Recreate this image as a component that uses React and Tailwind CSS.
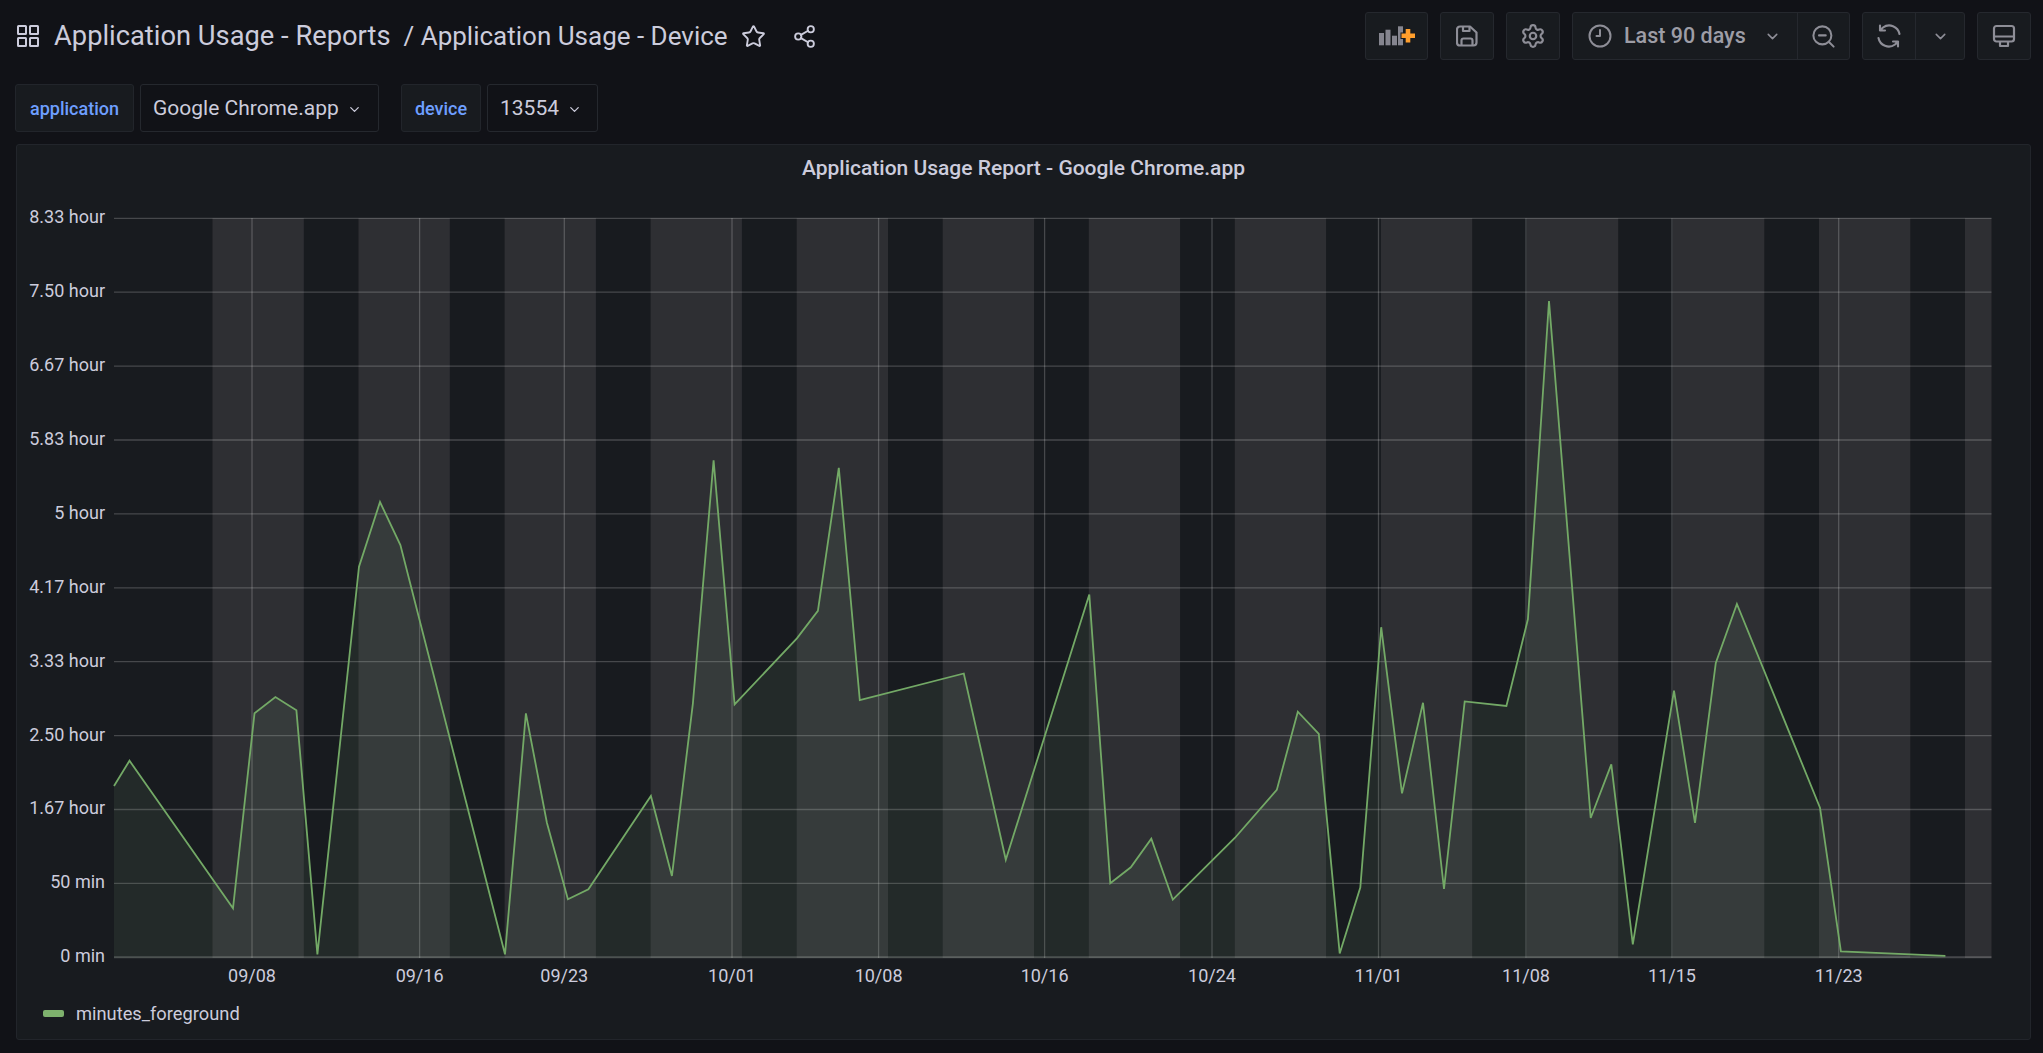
import React from "react";
import { Star, Share2, ChevronDown, Settings, ZoomOut } from "lucide-react";

const yTicks = [
  ["8.33 hour", 218.7],
  ["7.50 hour", 292.6],
  ["6.67 hour", 366.5],
  ["5.83 hour", 440.4],
  ["5 hour", 514.3],
  ["4.17 hour", 588.2],
  ["3.33 hour", 662.1],
  ["2.50 hour", 736],
  ["1.67 hour", 809.9],
  ["50 min", 883.8],
  ["0 min", 957.7],
];

const xTicks = [
  ["09/08", 252],
  ["09/16", 419.6],
  ["09/23", 564.3],
  ["10/01", 732],
  ["10/08", 878.6],
  ["10/16", 1044.6],
  ["10/24", 1212],
  ["11/01", 1378.5],
  ["11/08", 1526],
  ["11/15", 1672],
  ["11/23", 1838.7],
];

const bands = [212.5, 358.5, 504.6, 650.6, 796.7, 942.7, 1088.8, 1234.8, 1380.9, 1526.9, 1673, 1819, 1965];

const points = [
  [114, 786], [129.5, 760.7], [233, 908.3], [254.5, 713.3], [275.4, 697], [296.4, 710.3], [317.4, 954.3],
  [359, 566.7], [380, 502], [400.4, 545], [505, 954.3], [525.9, 713.3], [546.9, 822.7], [567.9, 899.3],
  [588.4, 889.3], [650.9, 796], [671.9, 876], [692.9, 703.3], [713.6, 460.3], [734.6, 704.4], [796.9, 638.3],
  [817.9, 610.8], [838.8, 467.9], [859.8, 700], [963.8, 673.5], [1005.8, 859.8], [1089.3, 594.6], [1110.3, 883.2],
  [1130.8, 867.3], [1151.3, 838.7], [1172.8, 899.7], [1234.8, 838], [1276.8, 789.9], [1297.8, 711.7], [1318.8, 734],
  [1339.7, 953.4], [1360.3, 887.5], [1381.2, 627.2], [1402, 793.4], [1423, 702.8], [1444, 889], [1464.7, 701.4],
  [1506.4, 705.9], [1527.9, 619.3], [1549, 301], [1590.7, 818], [1611.3, 764.4], [1632.8, 944.3], [1674, 690.7],
  [1695, 822.9], [1715.8, 663], [1736.9, 604], [1820, 807.7], [1840.9, 951.4], [1945.4, 955.9],
];

const line = points.map((p) => p.join(",")).join(" ");
const area = `114,958 ${line} 1945.4,958`;

const AppsIcon = () => (
  <svg width="24" height="24" viewBox="0 0 24 24" fill="none" stroke="#ccccdc" strokeWidth="2">
    <rect x="2" y="2" width="8" height="8" rx="0.5" />
    <rect x="14" y="2" width="8" height="8" rx="0.5" />
    <rect x="2" y="14" width="8" height="8" rx="0.5" />
    <rect x="14" y="14" width="8" height="8" rx="0.5" />
  </svg>
);

const PanelAddIcon = () => (
  <svg width="38" height="24" viewBox="0 0 38 24" fill="#85858f">
    <rect x="1" y="9" width="5" height="12.300" />
    <rect x="7.500" y="5.700" width="5" height="15.600" />
    <rect x="14" y="11.700" width="5" height="9.600" />
    <rect x="20" y="2.300" width="5" height="19" />
    <path
      d="M27.700 5h4.600v4.400H37V14h-4.700v4.500h-4.600V14H23.500V9.400h4.200z"
      fill="#ff9e2c"
      stroke="#181b1f"
      strokeWidth="2"
      paintOrder="stroke"
    />
  </svg>
);

const SaveIcon = () => (
  <svg width="22" height="22" viewBox="0 0 22 22" fill="none" stroke="#8e8e97" strokeWidth="2.200" strokeLinejoin="round">
    <path d="M4 1.500h10l6.500 6v10a3 3 0 0 1-3 3h-13.500a3 3 0 0 1-3-3v-13a3 3 0 0 1 3-3z" />
    <path d="M7 1.500v4.500h6.500V1.500M5.500 20.500v-5a2 2 0 0 1 2-2h7a2 2 0 0 1 2 2v5" />
  </svg>
);

const ClockIcon = () => (
  <svg width="24" height="24" viewBox="0 0 24 24" fill="none" stroke="#8e8e97" strokeWidth="2" strokeLinecap="round" strokeLinejoin="round">
    <circle cx="12" cy="12" r="10.500" />
    <path d="M12 6v6H8.500" />
  </svg>
);

const SyncIcon = () => (
  <svg width="24" height="24" viewBox="0 0 24 24" fill="none" stroke="#8e8e97" strokeWidth="2.100" strokeLinecap="round" strokeLinejoin="round">
    <path d="M22.500 10A10.500 10.500 0 0 0 6 3.500L3 6.500M3 1.500v5h5" />
    <path d="M1.500 14A10.500 10.500 0 0 0 18 20.500l3-3M21 22.500v-5h-5" />
  </svg>
);

const MonitorIcon = () => (
  <svg width="24" height="24" viewBox="0 0 24 24" fill="none" stroke="#8e8e97" strokeWidth="2.200" strokeLinejoin="round">
    <rect x="2" y="2" width="20" height="15.500" rx="2.500" />
    <path d="M2 12.500h20M8 17.500v4.500h8v-4.500" />
  </svg>
);

const ToolButton = ({ children, className }) => (
  <div className={`h-[48px] flex items-center justify-center bg-[#181b1f] border border-[#25282e] rounded-[3px] ${className}`}>
    {children}
  </div>
);

const VarLabel = ({ children, className }) => (
  <div className={`h-[48px] flex items-center justify-center bg-[#181b1f] border border-[#22252b] rounded-[3px] text-[#6e9fff] text-[18px] font-medium ${className}`}>
    {children}
  </div>
);

const VarSelect = ({ children, className }) => (
  <div className={`h-[48px] flex items-center gap-[8px] pl-[12px] pt-[2px] bg-[#111217] border border-[#25282e] rounded-[3px] text-[#ccccdc] text-[21px] ${className}`}>
    {children}
    <ChevronDown size={15} color="#ccccdc" />
  </div>
);

const App = () => {
  return (
    <div className="w-[2043px] h-[1053px] overflow-hidden bg-[#111217] pl-[15px] pr-[12px] pt-[12px] font-['Roboto',sans-serif]">
      {/* top bar */}
      <div className="h-[48px] flex items-center justify-between">
        <div className="flex items-center text-[#ccccdc] pl-[1px]">
          <AppsIcon />
          <span className="ml-[14px] text-[27.3px]">Application Usage - Reports</span>
          <span className="ml-[13px] text-[26px]">/ Application Usage - Device</span>
          <Star size={25} strokeWidth={1.8} className="ml-[13px]" color="#ccccdc" />
          <Share2 size={25} strokeWidth={1.8} className="ml-[26px]" color="#ccccdc" />
        </div>
        <div className="flex items-center">
          <ToolButton className="w-[63px]"><PanelAddIcon /></ToolButton>
          <ToolButton className="w-[54px] ml-[12px]"><SaveIcon /></ToolButton>
          <ToolButton className="w-[54px] ml-[12px]"><Settings size={26} strokeWidth={2} color="#8e8e97" /></ToolButton>
          <ToolButton className="w-[278px] ml-[12px] !justify-start">
            <div className="w-[225px] h-full flex items-center border-r border-[#25282e] pl-[15px] text-[#9d9da6] text-[21.5px] font-medium">
              <ClockIcon />
              <span className="ml-[12px]">Last 90 days</span>
              <ChevronDown size={17} strokeWidth={2.2} color="#8e8e97" className="ml-[18px]" />
            </div>
            <div className="flex-1 flex items-center justify-center">
              <ZoomOut size={27} strokeWidth={1.8} color="#8e8e97" />
            </div>
          </ToolButton>
          <ToolButton className="w-[103px] ml-[12px] !justify-start">
            <div className="w-[53px] h-full flex items-center justify-center border-r border-[#25282e]">
              <SyncIcon />
            </div>
            <div className="flex-1 flex items-center justify-center">
              <ChevronDown size={17} strokeWidth={2.2} color="#8e8e97" />
            </div>
          </ToolButton>
          <ToolButton className="w-[54px] ml-[12px]"><MonitorIcon /></ToolButton>
        </div>
      </div>

      {/* variables */}
      <div className="flex items-center mt-[24px]">
        <VarLabel className="w-[119px]">application</VarLabel>
        <VarSelect className="w-[239px] ml-[6px]">Google Chrome.app</VarSelect>
        <VarLabel className="w-[80px] ml-[22px]">device</VarLabel>
        <VarSelect className="w-[111px] ml-[6px]">13554</VarSelect>
      </div>

      {/* panel */}
      <div className="mt-[12px] ml-[1px] w-[2015px] h-[896px] bg-[#181b1f] border border-[#22252b] rounded-[3px] flex flex-col">
        <div className="h-[48px] shrink-0 flex items-center justify-center text-[#ccccdc] text-[21px] font-medium">
          Application Usage Report - Google Chrome.app
        </div>
        <svg width="2013" height="800" viewBox="17 193 2013 800" className="block shrink-0">
          {bands.map((x) => (
            <rect key={x} x={x} y={218} width={Math.min(91.3, 1991.5 - x)} height={740} fill="#2e2f33" />
          ))}
          {yTicks.map(([label, y]) => (
            <g key={label}>
              <line x1="114" x2="1991.5" y1={y - 0.4} y2={y - 0.4} stroke="#ffffff" strokeOpacity="0.2" strokeWidth={y > 950 ? 2 : 1.3} />
              <text x="105" y={y + 4.500} textAnchor="end" fontSize="18" fill="#ccccdc">{label}</text>
            </g>
          ))}
          {xTicks.map(([label, x]) => (
            <g key={label}>
              <line x1={x} x2={x} y1="218" y2="958" stroke="#ffffff" strokeOpacity="0.2" strokeWidth="1.3" />
              <text x={x} y="982" textAnchor="middle" fontSize="18" fill="#ccccdc">{label}</text>
            </g>
          ))}
          <polygon points={area} fill="#80a880" fillOpacity="0.11" />
          <polyline points={line} fill="none" stroke="#73a966" strokeWidth="1.8" strokeLinejoin="miter" />
        </svg>
        <div className="flex items-center ml-[26px] mt-[7px] text-[#ccccdc] text-[18.3px]">
          <div className="w-[21px] h-[7px] rounded-[2px] bg-[#7eb26d]" />
          <span className="ml-[12px]">minutes_foreground</span>
        </div>
      </div>
    </div>
  );
};

export default App;
